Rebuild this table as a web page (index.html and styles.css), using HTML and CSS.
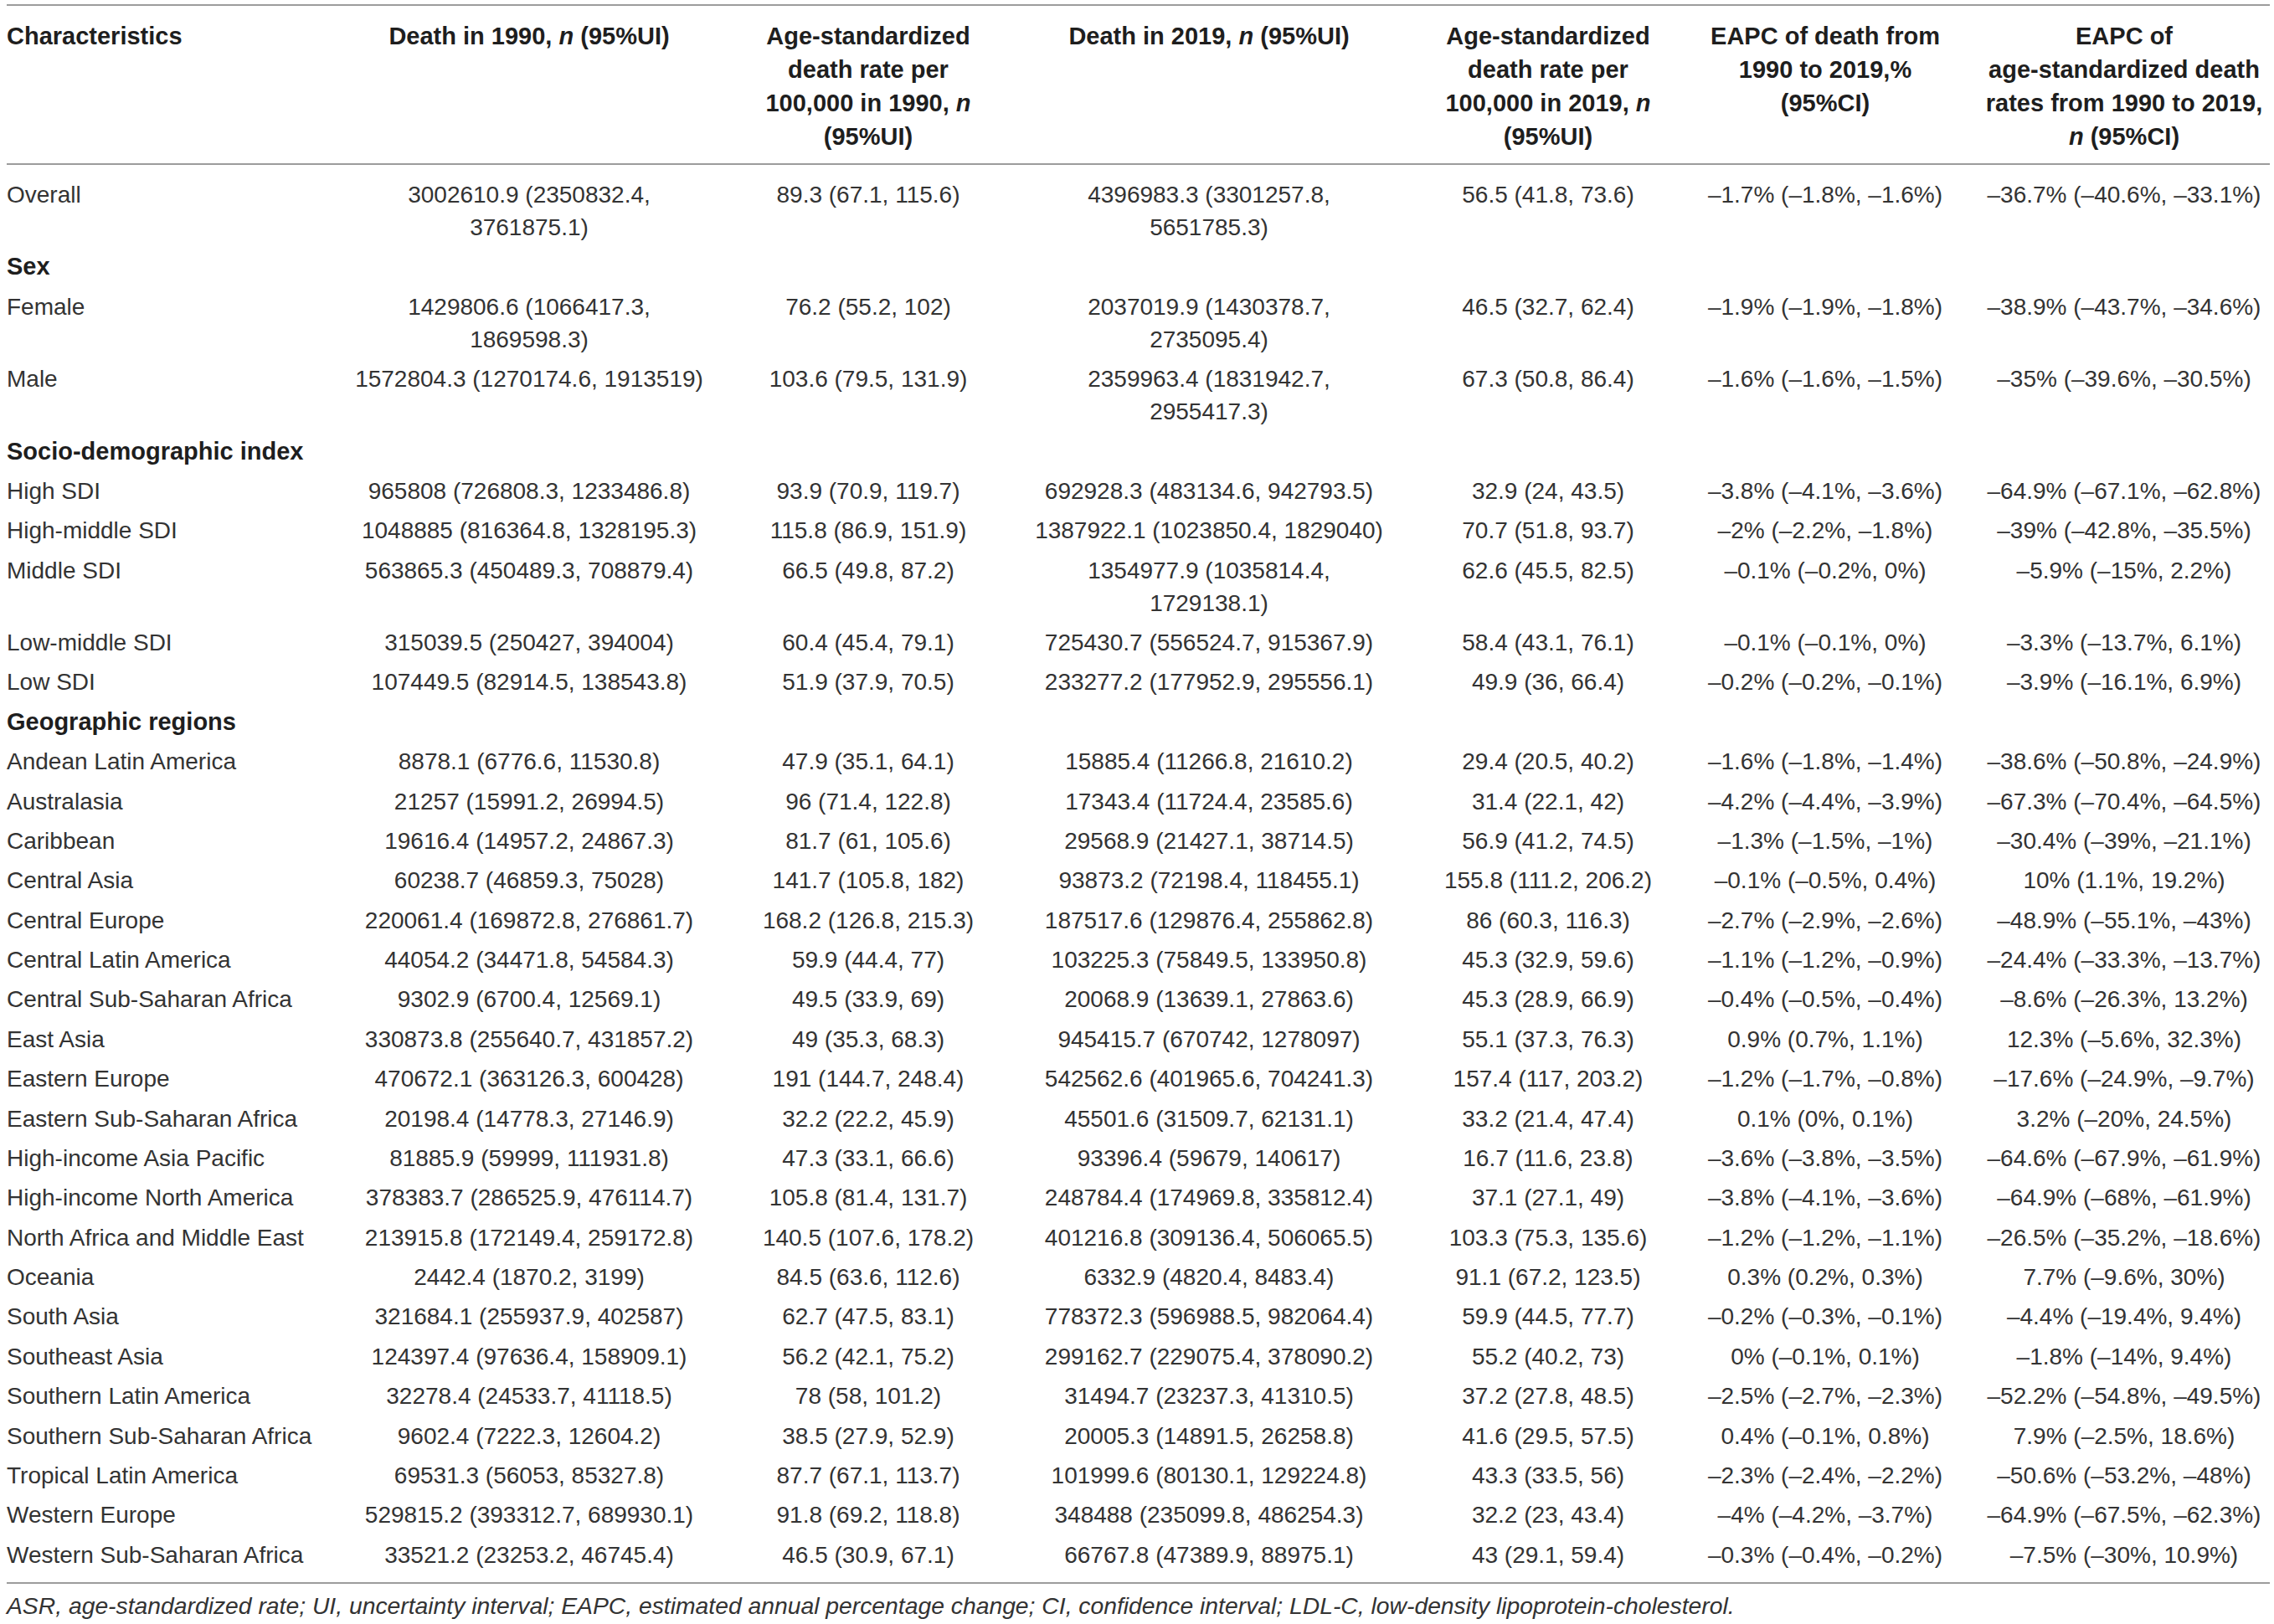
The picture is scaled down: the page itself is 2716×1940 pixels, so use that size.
FILE: index.html
```html
<!DOCTYPE html>
<html lang="en">
<head>
    <meta charset="UTF-8">
    <title>Deaths and EAPC by characteristics, 1990 to 2019</title>
    <link rel="stylesheet" href="styles.css">
</head>
<body>
    <div id="page">
        <table class="data">
            <colgroup>
                <col class="c-label">
                <col class="c-count">
                <col class="c-rate">
                <col class="c-count2">
                <col class="c-rate2">
                <col class="c-eapc">
                <col class="c-eapc2">
            </colgroup>
            <thead>
                <tr>
                    <th class="label">Characteristics</th>
                    <th>Death in 1990, <i>n</i> (95%UI)</th>
                    <th>Age-standardized<br>death rate per<br>100,000 in 1990, <i>n</i><br>(95%UI)</th>
                    <th>Death in 2019, <i>n</i> (95%UI)</th>
                    <th>Age-standardized<br>death rate per<br>100,000 in 2019, <i>n</i><br>(95%UI)</th>
                    <th>EAPC of death from<br>1990 to 2019,%<br>(95%CI)</th>
                    <th>EAPC of<br>age-standardized death<br>rates from 1990 to 2019,<br><i>n</i> (95%CI)</th>
                </tr>
            </thead>
            <tbody>
                <tr>
                    <td class="label">Overall</td>
                    <td>3002610.9 (2350832.4,<br>3761875.1)</td>
                    <td>89.3 (67.1, 115.6)</td>
                    <td>4396983.3 (3301257.8,<br>5651785.3)</td>
                    <td>56.5 (41.8, 73.6)</td>
                    <td>–1.7% (–1.8%, –1.6%)</td>
                    <td>–36.7% (–40.6%, –33.1%)</td>
                </tr>
                <tr class="section"><td class="label">Sex</td><td></td><td></td><td></td><td></td><td></td><td></td></tr>
                <tr>
                    <td class="label">Female</td>
                    <td>1429806.6 (1066417.3,<br>1869598.3)</td>
                    <td>76.2 (55.2, 102)</td>
                    <td>2037019.9 (1430378.7,<br>2735095.4)</td>
                    <td>46.5 (32.7, 62.4)</td>
                    <td>–1.9% (–1.9%, –1.8%)</td>
                    <td>–38.9% (–43.7%, –34.6%)</td>
                </tr>
                <tr>
                    <td class="label">Male</td>
                    <td>1572804.3 (1270174.6, 1913519)</td>
                    <td>103.6 (79.5, 131.9)</td>
                    <td>2359963.4 (1831942.7,<br>2955417.3)</td>
                    <td>67.3 (50.8, 86.4)</td>
                    <td>–1.6% (–1.6%, –1.5%)</td>
                    <td>–35% (–39.6%, –30.5%)</td>
                </tr>
                <tr class="section"><td class="label">Socio-demographic index</td><td></td><td></td><td></td><td></td><td></td><td></td></tr>
                <tr>
                    <td class="label">High SDI</td>
                    <td>965808 (726808.3, 1233486.8)</td>
                    <td>93.9 (70.9, 119.7)</td>
                    <td>692928.3 (483134.6, 942793.5)</td>
                    <td>32.9 (24, 43.5)</td>
                    <td>–3.8% (–4.1%, –3.6%)</td>
                    <td>–64.9% (–67.1%, –62.8%)</td>
                </tr>
                <tr>
                    <td class="label">High-middle SDI</td>
                    <td>1048885 (816364.8, 1328195.3)</td>
                    <td>115.8 (86.9, 151.9)</td>
                    <td>1387922.1 (1023850.4, 1829040)</td>
                    <td>70.7 (51.8, 93.7)</td>
                    <td>–2% (–2.2%, –1.8%)</td>
                    <td>–39% (–42.8%, –35.5%)</td>
                </tr>
                <tr>
                    <td class="label">Middle SDI</td>
                    <td>563865.3 (450489.3, 708879.4)</td>
                    <td>66.5 (49.8, 87.2)</td>
                    <td>1354977.9 (1035814.4,<br>1729138.1)</td>
                    <td>62.6 (45.5, 82.5)</td>
                    <td>–0.1% (–0.2%, 0%)</td>
                    <td>–5.9% (–15%, 2.2%)</td>
                </tr>
                <tr>
                    <td class="label">Low-middle SDI</td>
                    <td>315039.5 (250427, 394004)</td>
                    <td>60.4 (45.4, 79.1)</td>
                    <td>725430.7 (556524.7, 915367.9)</td>
                    <td>58.4 (43.1, 76.1)</td>
                    <td>–0.1% (–0.1%, 0%)</td>
                    <td>–3.3% (–13.7%, 6.1%)</td>
                </tr>
                <tr>
                    <td class="label">Low SDI</td>
                    <td>107449.5 (82914.5, 138543.8)</td>
                    <td>51.9 (37.9, 70.5)</td>
                    <td>233277.2 (177952.9, 295556.1)</td>
                    <td>49.9 (36, 66.4)</td>
                    <td>–0.2% (–0.2%, –0.1%)</td>
                    <td>–3.9% (–16.1%, 6.9%)</td>
                </tr>
                <tr class="section"><td class="label">Geographic regions</td><td></td><td></td><td></td><td></td><td></td><td></td></tr>
                <tr>
                    <td class="label">Andean Latin America</td>
                    <td>8878.1 (6776.6, 11530.8)</td>
                    <td>47.9 (35.1, 64.1)</td>
                    <td>15885.4 (11266.8, 21610.2)</td>
                    <td>29.4 (20.5, 40.2)</td>
                    <td>–1.6% (–1.8%, –1.4%)</td>
                    <td>–38.6% (–50.8%, –24.9%)</td>
                </tr>
                <tr>
                    <td class="label">Australasia</td>
                    <td>21257 (15991.2, 26994.5)</td>
                    <td>96 (71.4, 122.8)</td>
                    <td>17343.4 (11724.4, 23585.6)</td>
                    <td>31.4 (22.1, 42)</td>
                    <td>–4.2% (–4.4%, –3.9%)</td>
                    <td>–67.3% (–70.4%, –64.5%)</td>
                </tr>
                <tr>
                    <td class="label">Caribbean</td>
                    <td>19616.4 (14957.2, 24867.3)</td>
                    <td>81.7 (61, 105.6)</td>
                    <td>29568.9 (21427.1, 38714.5)</td>
                    <td>56.9 (41.2, 74.5)</td>
                    <td>–1.3% (–1.5%, –1%)</td>
                    <td>–30.4% (–39%, –21.1%)</td>
                </tr>
                <tr>
                    <td class="label">Central Asia</td>
                    <td>60238.7 (46859.3, 75028)</td>
                    <td>141.7 (105.8, 182)</td>
                    <td>93873.2 (72198.4, 118455.1)</td>
                    <td>155.8 (111.2, 206.2)</td>
                    <td>–0.1% (–0.5%, 0.4%)</td>
                    <td>10% (1.1%, 19.2%)</td>
                </tr>
                <tr>
                    <td class="label">Central Europe</td>
                    <td>220061.4 (169872.8, 276861.7)</td>
                    <td>168.2 (126.8, 215.3)</td>
                    <td>187517.6 (129876.4, 255862.8)</td>
                    <td>86 (60.3, 116.3)</td>
                    <td>–2.7% (–2.9%, –2.6%)</td>
                    <td>–48.9% (–55.1%, –43%)</td>
                </tr>
                <tr>
                    <td class="label">Central Latin America</td>
                    <td>44054.2 (34471.8, 54584.3)</td>
                    <td>59.9 (44.4, 77)</td>
                    <td>103225.3 (75849.5, 133950.8)</td>
                    <td>45.3 (32.9, 59.6)</td>
                    <td>–1.1% (–1.2%, –0.9%)</td>
                    <td>–24.4% (–33.3%, –13.7%)</td>
                </tr>
                <tr>
                    <td class="label">Central Sub-Saharan Africa</td>
                    <td>9302.9 (6700.4, 12569.1)</td>
                    <td>49.5 (33.9, 69)</td>
                    <td>20068.9 (13639.1, 27863.6)</td>
                    <td>45.3 (28.9, 66.9)</td>
                    <td>–0.4% (–0.5%, –0.4%)</td>
                    <td>–8.6% (–26.3%, 13.2%)</td>
                </tr>
                <tr>
                    <td class="label">East Asia</td>
                    <td>330873.8 (255640.7, 431857.2)</td>
                    <td>49 (35.3, 68.3)</td>
                    <td>945415.7 (670742, 1278097)</td>
                    <td>55.1 (37.3, 76.3)</td>
                    <td>0.9% (0.7%, 1.1%)</td>
                    <td>12.3% (–5.6%, 32.3%)</td>
                </tr>
                <tr>
                    <td class="label">Eastern Europe</td>
                    <td>470672.1 (363126.3, 600428)</td>
                    <td>191 (144.7, 248.4)</td>
                    <td>542562.6 (401965.6, 704241.3)</td>
                    <td>157.4 (117, 203.2)</td>
                    <td>–1.2% (–1.7%, –0.8%)</td>
                    <td>–17.6% (–24.9%, –9.7%)</td>
                </tr>
                <tr>
                    <td class="label">Eastern Sub-Saharan Africa</td>
                    <td>20198.4 (14778.3, 27146.9)</td>
                    <td>32.2 (22.2, 45.9)</td>
                    <td>45501.6 (31509.7, 62131.1)</td>
                    <td>33.2 (21.4, 47.4)</td>
                    <td>0.1% (0%, 0.1%)</td>
                    <td>3.2% (–20%, 24.5%)</td>
                </tr>
                <tr>
                    <td class="label">High-income Asia Pacific</td>
                    <td>81885.9 (59999, 111931.8)</td>
                    <td>47.3 (33.1, 66.6)</td>
                    <td>93396.4 (59679, 140617)</td>
                    <td>16.7 (11.6, 23.8)</td>
                    <td>–3.6% (–3.8%, –3.5%)</td>
                    <td>–64.6% (–67.9%, –61.9%)</td>
                </tr>
                <tr>
                    <td class="label">High-income North America</td>
                    <td>378383.7 (286525.9, 476114.7)</td>
                    <td>105.8 (81.4, 131.7)</td>
                    <td>248784.4 (174969.8, 335812.4)</td>
                    <td>37.1 (27.1, 49)</td>
                    <td>–3.8% (–4.1%, –3.6%)</td>
                    <td>–64.9% (–68%, –61.9%)</td>
                </tr>
                <tr>
                    <td class="label">North Africa and Middle East</td>
                    <td>213915.8 (172149.4, 259172.8)</td>
                    <td>140.5 (107.6, 178.2)</td>
                    <td>401216.8 (309136.4, 506065.5)</td>
                    <td>103.3 (75.3, 135.6)</td>
                    <td>–1.2% (–1.2%, –1.1%)</td>
                    <td>–26.5% (–35.2%, –18.6%)</td>
                </tr>
                <tr>
                    <td class="label">Oceania</td>
                    <td>2442.4 (1870.2, 3199)</td>
                    <td>84.5 (63.6, 112.6)</td>
                    <td>6332.9 (4820.4, 8483.4)</td>
                    <td>91.1 (67.2, 123.5)</td>
                    <td>0.3% (0.2%, 0.3%)</td>
                    <td>7.7% (–9.6%, 30%)</td>
                </tr>
                <tr>
                    <td class="label">South Asia</td>
                    <td>321684.1 (255937.9, 402587)</td>
                    <td>62.7 (47.5, 83.1)</td>
                    <td>778372.3 (596988.5, 982064.4)</td>
                    <td>59.9 (44.5, 77.7)</td>
                    <td>–0.2% (–0.3%, –0.1%)</td>
                    <td>–4.4% (–19.4%, 9.4%)</td>
                </tr>
                <tr>
                    <td class="label">Southeast Asia</td>
                    <td>124397.4 (97636.4, 158909.1)</td>
                    <td>56.2 (42.1, 75.2)</td>
                    <td>299162.7 (229075.4, 378090.2)</td>
                    <td>55.2 (40.2, 73)</td>
                    <td>0% (–0.1%, 0.1%)</td>
                    <td>–1.8% (–14%, 9.4%)</td>
                </tr>
                <tr>
                    <td class="label">Southern Latin America</td>
                    <td>32278.4 (24533.7, 41118.5)</td>
                    <td>78 (58, 101.2)</td>
                    <td>31494.7 (23237.3, 41310.5)</td>
                    <td>37.2 (27.8, 48.5)</td>
                    <td>–2.5% (–2.7%, –2.3%)</td>
                    <td>–52.2% (–54.8%, –49.5%)</td>
                </tr>
                <tr>
                    <td class="label">Southern Sub-Saharan Africa</td>
                    <td>9602.4 (7222.3, 12604.2)</td>
                    <td>38.5 (27.9, 52.9)</td>
                    <td>20005.3 (14891.5, 26258.8)</td>
                    <td>41.6 (29.5, 57.5)</td>
                    <td>0.4% (–0.1%, 0.8%)</td>
                    <td>7.9% (–2.5%, 18.6%)</td>
                </tr>
                <tr>
                    <td class="label">Tropical Latin America</td>
                    <td>69531.3 (56053, 85327.8)</td>
                    <td>87.7 (67.1, 113.7)</td>
                    <td>101999.6 (80130.1, 129224.8)</td>
                    <td>43.3 (33.5, 56)</td>
                    <td>–2.3% (–2.4%, –2.2%)</td>
                    <td>–50.6% (–53.2%, –48%)</td>
                </tr>
                <tr>
                    <td class="label">Western Europe</td>
                    <td>529815.2 (393312.7, 689930.1)</td>
                    <td>91.8 (69.2, 118.8)</td>
                    <td>348488 (235099.8, 486254.3)</td>
                    <td>32.2 (23, 43.4)</td>
                    <td>–4% (–4.2%, –3.7%)</td>
                    <td>–64.9% (–67.5%, –62.3%)</td>
                </tr>
                <tr>
                    <td class="label">Western Sub-Saharan Africa</td>
                    <td>33521.2 (23253.2, 46745.4)</td>
                    <td>46.5 (30.9, 67.1)</td>
                    <td>66767.8 (47389.9, 88975.1)</td>
                    <td>43 (29.1, 59.4)</td>
                    <td>–0.3% (–0.4%, –0.2%)</td>
                    <td>–7.5% (–30%, 10.9%)</td>
                </tr>
            </tbody>
        </table>
        <p class="note">ASR, age-standardized rate; UI, uncertainty interval; EAPC, estimated annual percentage change; CI, confidence interval; LDL-C, low-density lipoprotein-cholesterol.</p>
    </div>
</body>
</html>
```

FILE: styles.css
```css
body {
    margin: 0;
    background-color: #ffffff;
    font-family: "Liberation Sans", Arial, sans-serif;
    color: #333333;
}

#page {
    padding: 5px 5px 0 8px;
}

.data {
    width: 2703px;
    border-collapse: collapse;
    table-layout: fixed;
    font-size: 28px;
    line-height: 39px;
}

.c-label { width: 369px; }
.c-count { width: 510px; }
.c-rate { width: 300px; }
.c-count2 { width: 514px; }
.c-rate2 { width: 296px; }
.c-eapc { width: 366px; }
.c-eapc2 { width: 348px; }

.data th {
    font-size: 29px;
    font-weight: bold;
    line-height: 40px;
    color: #1e1e1e;
    text-align: center;
    vertical-align: top;
    padding: 16px 0 12px;
    border-top: 2px solid #9c9c9c;
    border-bottom: 2px solid #9c9c9c;
}

.data td {
    padding: 4.2px 0;
    text-align: center;
    vertical-align: top;
    white-space: nowrap;
}

.data .label {
    text-align: left;
}

.section td {
    font-size: 29px;
    font-weight: bold;
    color: #1e1e1e;
}

.data tbody tr:first-child td {
    padding-top: 16px;
}

.data tbody tr:last-child td {
    padding-bottom: 13px;
    border-bottom: 2px solid #9c9c9c;
}

.note {
    margin: 6px 0 0;
    font-size: 28.3px;
    line-height: 40px;
    font-style: italic;
}
```
